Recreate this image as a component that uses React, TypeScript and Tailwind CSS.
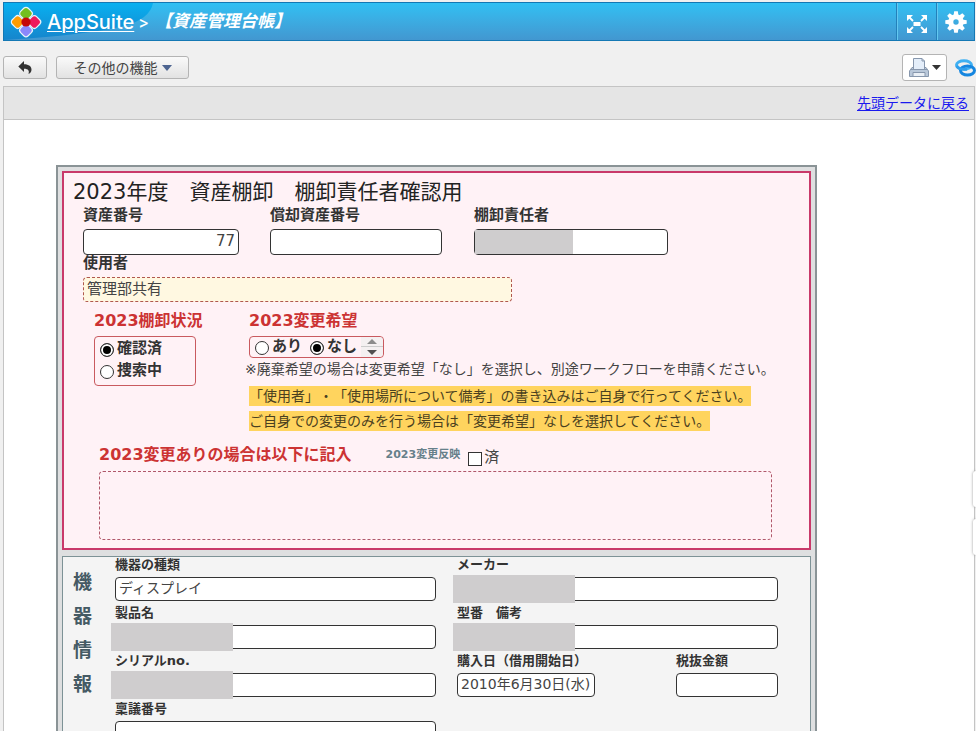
import type { ReactNode } from "react";

const boxStyle = "block w-full rounded border border-[#333] bg-white text-[#444] outline-none";

type FieldProps = {
  id: string;
  label: string;
  value?: string;
  masked?: boolean;
  className?: string;
};

/** Field of the upper inventory check panel. */
function CheckField({ id, label, value = "", masked, className = "" }: FieldProps) {
  return (
    <div className={className}>
      <label htmlFor={id} className="block text-[15px] leading-5 font-bold text-[#333]">
        {label}
      </label>
      <div className="relative mt-1">
        <input id={id} defaultValue={value} className={`${boxStyle} h-[26px] px-[3px] pb-0.5 text-right text-[15px]`} />
        {masked && <span className="absolute inset-y-px left-px w-[98px] bg-[#cfcdce]" />}
      </div>
    </div>
  );
}

/** Field of the device information panel. */
function DeviceField({ id, label, value = "", masked, className = "" }: FieldProps) {
  return (
    <div className={className}>
      <label htmlFor={id} className="block text-[13px] leading-4 font-bold whitespace-nowrap text-[#333]">
        {label}
      </label>
      <div className="relative mt-1">
        <input id={id} defaultValue={value} className={`${boxStyle} h-6 px-[3px] pb-1 text-sm`} />
        {masked && <span className="absolute -top-0.5 -left-1 h-7 w-[122px] bg-[#cfcdce]" />}
      </div>
    </div>
  );
}

function Radio({ name, children, checked }: { name: string; children: ReactNode; checked?: boolean }) {
  return (
    <label className="flex shrink-0 items-center gap-[3px] text-[15px] leading-[22px] font-bold whitespace-nowrap text-[#333]">
      <input
        type="radio"
        name={name}
        defaultChecked={checked}
        className="mt-1 size-3.5 shrink-0 appearance-none rounded-full border border-[#333] bg-white checked:bg-black checked:shadow-[inset_0_0_0_2px_white]"
      />
      {children}
    </label>
  );
}

function Logo() {
  return (
    <svg viewBox="0 0 34 34" className="size-[34px]" aria-hidden="true">
      <g stroke="#e9f4fa" strokeWidth="1.200" transform="rotate(45 17 17)">
        <rect x="5.700" y="5.700" width="10.800" height="10.800" rx="3.200" fill="#72bf1f" />
        <rect x="17.500" y="5.700" width="10.800" height="10.800" rx="3.200" fill="#ee1a5c" />
        <rect x="17.500" y="17.500" width="10.800" height="10.800" rx="3.200" fill="#8a88fb" />
        <rect x="5.700" y="17.500" width="10.800" height="10.800" rx="3.200" fill="#ff9c00" />
      </g>
      <circle cx="17" cy="17" r="4.600" fill="#c40808" />
    </svg>
  );
}

function ExpandIcon() {
  return (
    <svg viewBox="0 0 20 20" className="size-5" fill="#fff" stroke="#fff" aria-hidden="true">
      <rect x="6.500" y="8" width="7" height="4" stroke="none" />
      <path d="M0 1H6L0 7ZM20 1H14L20 7ZM0 19H6L0 13ZM20 19H14L20 13Z" stroke="none" />
      <path d="M2 3 6 7M18 3 14 7M2 17 6 13M18 17 14 13" strokeWidth="1.800" />
    </svg>
  );
}

function GearIcon() {
  const teeth = [0, 45, 90, 135, 180, 225, 270, 315];
  return (
    <svg viewBox="0 0 22 22" className="size-[22px]" aria-hidden="true">
      {teeth.map((a) => (
        <path key={a} d="M8.500 5 9.200 0.300H12.800L13.500 5Z" fill="#fff" transform={`rotate(${a} 11 11)`} />
      ))}
      <circle cx="11" cy="11" r="5.200" fill="none" stroke="#fff" strokeWidth="5" />
    </svg>
  );
}

function PrinterIcon() {
  return (
    <svg viewBox="0 0 20 20" className="size-5" stroke="#8797ad" strokeWidth="1" aria-hidden="true">
      <path d="M0.500 18.500V13L3 9.500H17L19.500 13V18.500Z" fill="#b9c8da" />
      <path d="M4.500 11.500V0.500H13L15.500 3V11.500Z" fill="#e4eefa" />
      <path d="M13 0.500V3H15.500M2 11.500H18" fill="none" />
      <path d="M4 18.500V14.500H16V18.500Z" fill="#e9eff6" />
    </svg>
  );
}

export default function App() {
  return (
    <div className="flex h-screen flex-col overflow-hidden bg-[#f0f0f0] pt-0.5 pl-[3px] font-['DejaVu_Sans','Noto_Sans_CJK_JP',sans-serif]">
      <header className="relative mr-px flex h-[39px] shrink-0 items-stretch border border-[#1478b4] bg-linear-to-b from-[#30c0f3] to-[#4297d0] font-[Inter,'Noto_Sans_CJK_JP',sans-serif] text-white">
        <svg viewBox="0 0 150 37" className="absolute top-0 left-0 h-[37px] w-[150px]" aria-hidden="true">
          <defs>
            <linearGradient id="swoosh" x1="0" y1="0" x2="0" y2="1">
              <stop offset="0" stopColor="#08b0f0" />
              <stop offset="1" stopColor="#1685cc" />
            </linearGradient>
          </defs>
          <path d="M0 0H149Q146 16 120 23 90 30 30 35L0 37Z" fill="url(#swoosh)" />
        </svg>
        <div className="relative flex grow items-center pl-[5px]">
          <Logo />
          <a href="#app" className="ml-1 text-[20px] leading-6 font-medium underline decoration-1 underline-offset-2">
            AppSuite
          </a>
          <span className="ml-1 text-base font-medium">&gt;</span>
          <h1 className="ml-1.5 text-[17px] font-bold italic">【資産管理台帳】</h1>
        </div>
        <button aria-label="全画面表示" className="relative flex w-10 items-center justify-center border-l border-[#2480ba] pt-1 shadow-[inset_1px_0_#63c8f0]">
          <ExpandIcon />
        </button>
        <button aria-label="設定" className="relative flex w-[38px] items-center justify-center border-l border-[#2480ba] shadow-[inset_1px_0_#63c8f0]">
          <GearIcon />
        </button>
      </header>

      <div className="flex h-[45px] shrink-0 items-center pt-2">
        <button aria-label="戻る" className="flex h-[23px] w-11 items-center justify-center rounded-[3px] border border-[#b4b4b4] bg-linear-to-b from-[#fafafa] to-[#e2e2e2]">
          <svg viewBox="0 0 14 13" className="h-[13px] w-3.5" fill="#333" aria-hidden="true">
            <path d="M6 0V3.200C11 3.200 13.500 5.500 13.500 8.500 13.500 10.500 12.500 12 10.500 13 11.500 10 10.500 7.800 6 7.800V11L0.300 5.500Z" />
          </svg>
        </button>
        <button className="ml-[9px] flex h-[23px] w-[133px] items-center justify-center gap-1 rounded-[3px] border border-[#b4b4b4] bg-linear-to-b from-[#fafafa] to-[#e2e2e2] text-sm leading-5 text-[#444]">
          その他の機能
          <svg viewBox="0 0 10 6" className="h-1.5 w-2.5" fill="#4d6490" aria-hidden="true">
            <path d="M0 0H10L5 6Z" />
          </svg>
        </button>
        <button aria-label="印刷" className="ml-auto flex h-[27px] w-[45px] items-center justify-center gap-[3px] rounded-[3px] border border-[#b4b4b4] bg-white">
          <PrinterIcon />
          <svg viewBox="0 0 9 5" className="h-[5px] w-[9px]" fill="#333" aria-hidden="true">
            <path d="M0 0H9L4.500 5Z" />
          </svg>
        </button>
        <button aria-label="リンク" className="ml-2 w-[21px]">
          <svg viewBox="0 0 21 18" className="h-[18px] w-[21px]" fill="none" aria-hidden="true">
            <ellipse cx="9" cy="6" rx="7.500" ry="4.300" stroke="#3fb0f2" strokeWidth="3" />
            <ellipse cx="12.500" cy="11.500" rx="7" ry="4.600" stroke="#1586e0" strokeWidth="3" />
            <path d="M1.600 7Q4 11 12 10.200" stroke="#2f9fec" strokeWidth="3" />
          </svg>
        </button>
      </div>

      <main className="relative mr-px flex grow flex-col border border-[#c4c4c4] bg-white">
        <nav className="flex h-[33px] shrink-0 items-center justify-end border-b border-[#c4c4c4] bg-[#e5e5e5] pr-[5px]">
          <a href="#top" className="text-sm leading-5 text-[#1a1aee] underline underline-offset-2">
            先頭データに戻る
          </a>
        </nav>

        <form className="mx-[52px] mt-[45px] w-full max-w-[761px] border-2 border-[#8a9396] bg-[#dedfe0] p-1">
          <section className="border-2 border-[#c9396a] bg-[#fff2f6] px-[9px] pt-1.5 pb-2">
            <h2 className="text-[21px] leading-[26px] text-[#222]">2023年度　資産棚卸　棚卸責任者確認用</h2>
            <div className="flex pl-2.5">
              <CheckField id="asset-no" label="資産番号" value="77" className="w-[156px]" />
              <CheckField id="dep-no" label="償却資産番号" className="ml-[31px] w-[172px]" />
              <CheckField id="manager" label="棚卸責任者" masked className="ml-8 w-[194px]" />
            </div>
            <div className="w-[439px] pl-2.5">
              <label htmlFor="user" className="block text-[15px] leading-4 font-bold text-[#333]">
                使用者
              </label>
              <input
                id="user"
                defaultValue="管理部共有"
                className="mt-1.5 block h-[25px] w-full rounded border border-dashed border-[#b0584e] bg-[#fff8e1] px-[3px] pb-1 text-[15px] text-[#444] outline-none"
              />
            </div>

            <div className="mt-2 flex pl-[21px]">
              <fieldset className="w-[155px]">
                <legend className="text-base leading-[22px] font-bold text-[#cc3333]">2023棚卸状況</legend>
                <div className="mt-1 w-[102px] rounded border border-[#c95a5f] pb-1 pl-[5px]">
                  <Radio name="status" checked>
                    確認済
                  </Radio>
                  <Radio name="status">捜索中</Radio>
                </div>
              </fieldset>
              <div className="min-w-0 grow">
                <fieldset>
                  <legend className="text-base leading-[22px] font-bold text-[#cc3333]">2023変更希望</legend>
                  <div className="mt-1 flex h-[22px] w-[135px] items-center rounded border border-[#c95a5f] pl-[5px]">
                    <div className="flex grow gap-2 pb-0.5">
                      <Radio name="change">あり</Radio>
                      <Radio name="change" checked>
                        なし
                      </Radio>
                    </div>
                    <span className="flex h-5 w-[22px] shrink-0 flex-col rounded-r bg-[#f4f0f1]">
                      <button type="button" aria-label="上へ" className="flex h-2.5 items-center justify-center border-b border-[#ccc]">
                        <svg viewBox="0 0 10 5" className="h-[5px] w-2.5" fill="#8c8c8c" aria-hidden="true">
                          <path d="M0 5H10L5 0Z" />
                        </svg>
                      </button>
                      <button type="button" aria-label="下へ" className="flex h-2.5 items-center justify-center">
                        <svg viewBox="0 0 10 5" className="h-[5px] w-2.5" fill="#505050" aria-hidden="true">
                          <path d="M0 0H10L5 5Z" />
                        </svg>
                      </button>
                    </span>
                  </div>
                </fieldset>
                <p className="-ml-1 text-sm leading-[22px] whitespace-nowrap text-[#444]">
                  ※廃棄希望の場合は変更希望「なし」を選択し、別途ワークフローを申請ください。
                </p>
                <div className="mt-1.5 flex flex-col items-start gap-[5px] text-sm leading-5 whitespace-nowrap text-[#4a4020] [text-spacing-trim:space-all]">
                  <p className="bg-[#ffd45e]">「使用者」・「使用場所について備考」の書き込みはご自身で行ってください。</p>
                  <p className="bg-[#ffd45e]">ご自身での変更のみを行う場合は「変更希望」なしを選択してください。</p>
                </div>
              </div>
            </div>

            <div className="mt-3.5 mr-7 pl-[26px]">
              <div className="flex h-5 items-center">
                <label htmlFor="change-detail" className="text-base leading-5 font-bold text-[#cc3333]">
                  2023変更ありの場合は以下に記入
                </label>
                <span className="ml-[34px] text-[11px] font-bold text-[#66808a]">2023変更反映</span>
                <label className="ml-2 flex items-center gap-0.5 pt-1 text-[15px] leading-5 text-[#444]">
                  <input type="checkbox" className="mt-1 size-3.5 appearance-none border border-[#333] bg-white checked:bg-[#333]" />
                  済
                </label>
              </div>
              <textarea
                id="change-detail"
                className="mt-1.5 block h-[69px] w-full resize-none rounded border border-dashed border-[#b0586a] bg-transparent p-1 text-sm text-[#444] outline-none"
              />
            </div>
          </section>

          <section className="mt-1.5 flex border border-[#7d9296] bg-[#f4f4f4] pr-8 pb-6">
            <h3 className="mr-[15px] ml-2.5 w-[27px] pt-2 text-[19px] leading-[34px] font-bold text-[#455a64]">機器情報</h3>
            <div className="grid grow grid-cols-2 gap-x-[21px] gap-y-1">
              <DeviceField id="kind" label="機器の種類" value="ディスプレイ" />
              <DeviceField id="maker" label="メーカー" masked />
              <DeviceField id="product" label="製品名" masked />
              <DeviceField id="model" label="型番　備考" masked />
              <DeviceField id="serial" label="シリアルno." masked />
              <div className="flex justify-between">
                <DeviceField id="bought" label="購入日（借用開始日）" value="2010年6月30日(水)" className="w-[138px]" />
                <DeviceField id="price" label="税抜金額" className="w-[102px]" />
              </div>
              <DeviceField id="ringi" label="稟議番号" />
            </div>
          </section>
        </form>

        <div className="absolute top-[384px] -right-0.5 flex flex-col gap-3">
          <span className="h-9 w-[3px] rounded-l bg-white shadow-[0_0_3px_#999]" />
          <span className="h-9 w-[3px] rounded-l bg-white shadow-[0_0_3px_#999]" />
        </div>
      </main>
    </div>
  );
}
